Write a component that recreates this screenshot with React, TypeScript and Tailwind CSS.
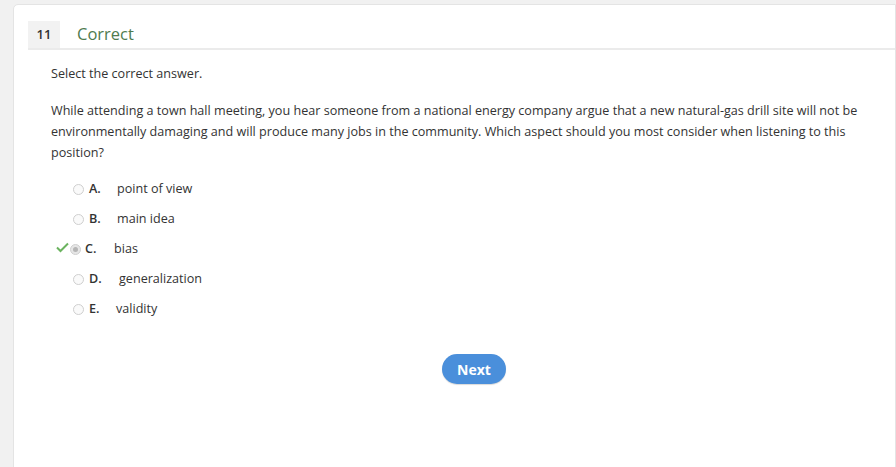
import React from "react";

const options = [
  { l: "A.", t: "point of view", w: "w-[28px]" },
  { l: "B.", t: "main idea", w: "w-[28px]" },
  { l: "C.", t: "bias", selected: true, w: "w-[29px]" },
  { l: "D.", t: "generalization", w: "w-[30px]" },
  { l: "E.", t: "validity", w: "w-[27px]" },
];

export default function App() {
  return (
    <div
      className="w-[896px] h-[467px] overflow-hidden bg-[#f1f1f1] pt-[4px] pl-[13px]"
      style={{ fontFamily: '"Open Sans", "Noto Sans", sans-serif' }}
    >
      <div className="h-[480px] bg-white border border-[#e4e4e4] rounded-tl-[5px] pl-[14px] pt-[16px] text-[#333] text-[12.6px]">
        <div className="flex items-stretch h-[29px] border-b-2 border-[#ebebeb]">
          <div className="w-[32px] bg-[#f2f2f2] flex items-center justify-center text-[13px] font-semibold text-[#333]">
            11
          </div>
          <div className="pl-[17px] flex items-center text-[16.5px] font-medium text-[#4f7b4f]">
            Correct
          </div>
        </div>
        <div className="pl-[23px] pr-[20px]">
          <p className="mt-[13px] leading-[21px]">Select the correct answer.</p>
          <p className="mt-[16px] leading-[21px]">
            While attending a town hall meeting, you hear someone from a national energy company argue that a new natural-gas drill site will not be environmentally damaging and will produce many jobs in the community. Which aspect should you most consider when listening to this position?
          </p>
          <div className="mt-[11px] flex flex-col">
            {options.map((o) => (
              <div key={o.l} className="h-[30px] flex items-center relative">
                {o.selected && (
                  <svg className="absolute left-[5px] top-[8px]" width="13" height="11" viewBox="0 0 13 11">
                    <path d="M1 5.5 L4.5 9 L12 1.5" fill="none" stroke="#6bb35f" strokeWidth="2" />
                  </svg>
                )}
                <div
                  className={`w-[11px] h-[11px] rounded-full border ${
                    o.selected
                      ? "ml-[19px] border-[#d0d0d0] bg-[#e6e6e6] flex items-center justify-center"
                      : "ml-[22px] border-[#cfcfcf] bg-[#fafafa]"
                  }`}
                >
                  {o.selected && <div className="w-[5px] h-[5px] rounded-full bg-[#b5b5b5]" />}
                </div>
                <span className={`font-semibold ${o.selected ? "ml-[4px]" : "ml-[5px]"} ${o.w}`}>{o.l}</span>
                <span>{o.t}</span>
              </div>
            ))}
          </div>
          <div className="mt-[30px] flex justify-center">
            <button className="ml-[22px] w-[64px] h-[30px] rounded-full bg-[#4a8fdb] text-white font-bold text-[14px] shadow-[0_1px_1px_rgba(0,0,0,0.15)]">
              Next
            </button>
          </div>
        </div>
      </div>
    </div>
  );
}
